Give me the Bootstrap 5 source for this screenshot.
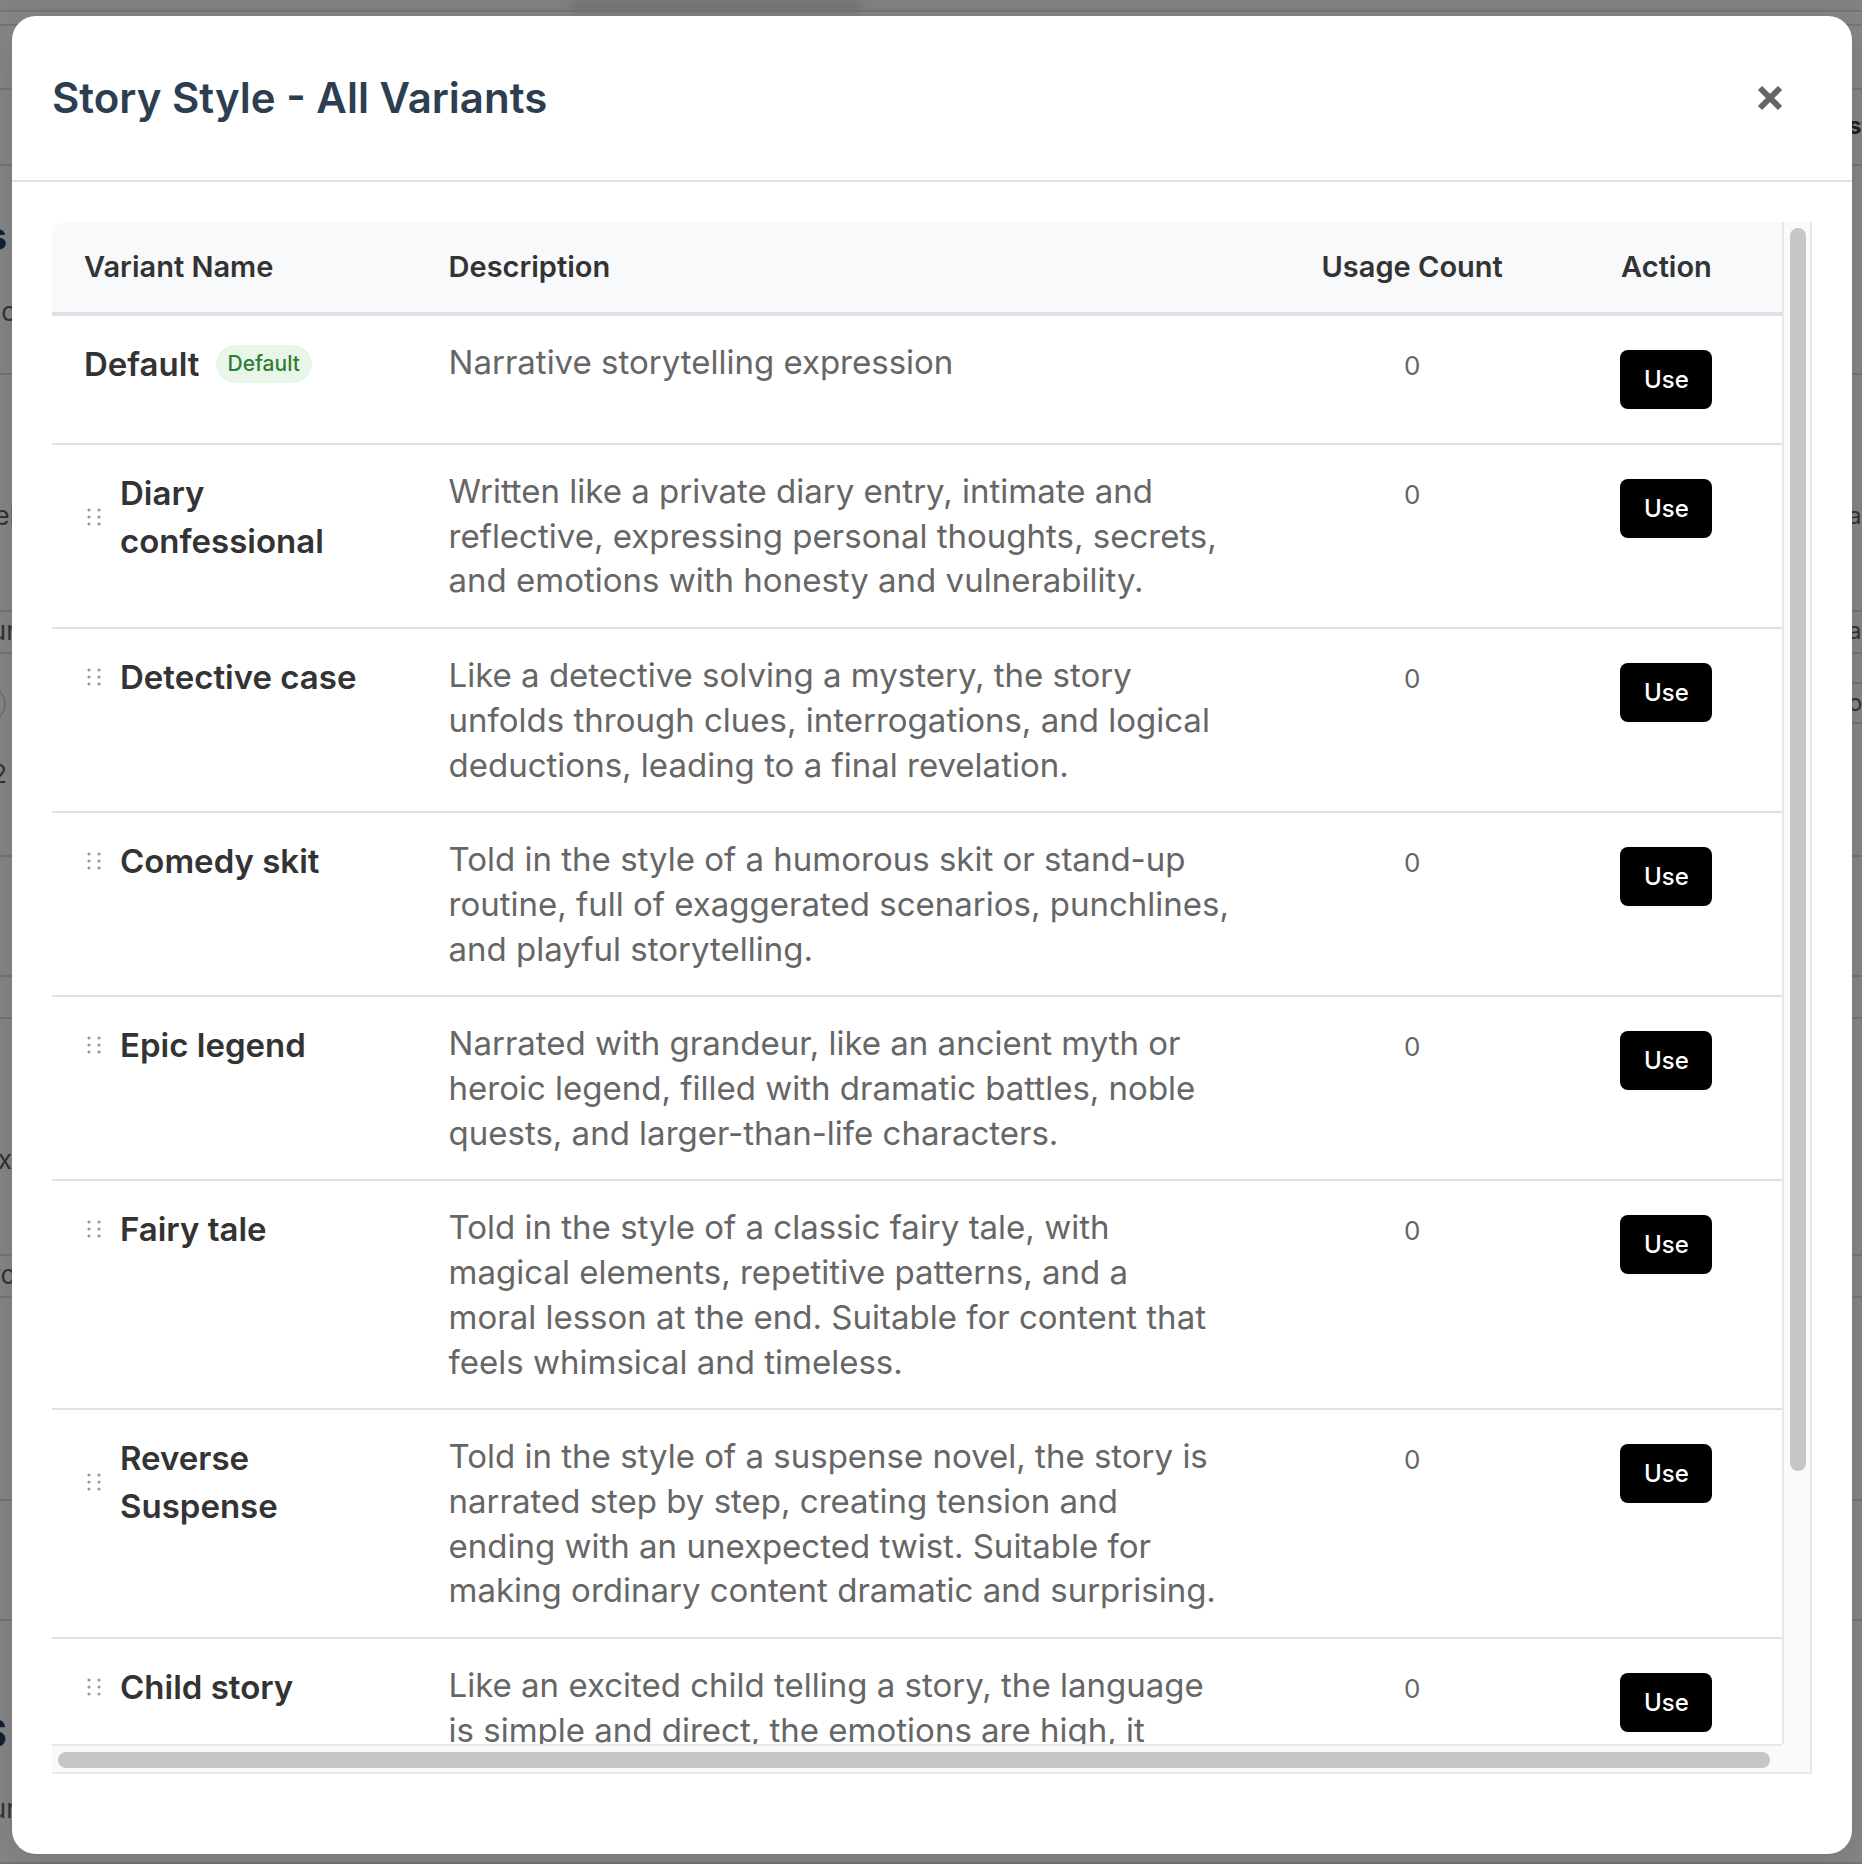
<!DOCTYPE html>
<html lang="en">
<head>
<meta charset="utf-8">
<meta name="viewport" content="width=device-width, initial-scale=1">
<title>Story Style - All Variants</title>
<link href="https://cdn.jsdelivr.net/npm/bootstrap@5.3.0/dist/css/bootstrap.min.css" rel="stylesheet">
<style>
  body { font-family: Inter, "Noto Sans", sans-serif; background: #868686; color: #333; height: 100vh; overflow: hidden; }

  /* dimmed page under the dialog */
  .under-page { position: absolute; inset: 0; overflow: hidden; font-size: 26px; line-height: 32px; color: #333; }
  .under-page section { display: flex; justify-content: space-between; border-bottom: 2px solid #757575; }
  .edge { width: 16px; display: flex; flex-direction: column; align-items: flex-end; white-space: nowrap; }
  .edge.edge-end { width: 14px; align-items: flex-start; font-size: 24px; }
  .edge b { color: #16212d; }
  .under-page .h-top { height: 12px; background: #828282; justify-content: center; }
  .top-shade { width: 290px; margin-right: 430px; background: #737373; filter: blur(4px); }
  .h-gap { height: 14px; }
  .h-bar { height: 64px; }
  .h-tabs { height: 76px; padding-top: 20px; }
  .h-intro { height: 209px; padding-top: 50px; }
  .h-field { height: 237px; padding-top: 125px; }
  .h-strip { height: 42px; padding-top: 3px; }
  .h-chips { height: 203px; padding-top: 28px; }
  .h-wide { height: 120px; }
  .h-last { height: 243px; padding-top: 92px; }
  .edge .big { font-size: 38px; line-height: 40px; }
  .edge .pill { width: 40px; height: 36px; margin: 4px 10px 36px 0; border: 2px solid #737373; border-radius: 18px; flex: none; }
  .edge .boxed { border: solid #737373; border-width: 2px 0; line-height: 38px; }
  .edge .pad-s { margin-right: 9px; }

  .variants-dialog { position: absolute; inset: 16px 10px 10px 12px; border-radius: 24px; box-shadow: 0 8px 40px rgba(0,0,0,.12); }
  .dialog-head { padding: 40px; height: 166px; border-bottom: 2px solid #dee2e6; }
  .dialog-title { font-size: 42px; line-height: 48px; font-weight: 600; color: #2c3e50; }
  .close-btn { width: 84px; height: 84px; }
  .dialog-main { padding: 40px 40px 80px; min-height: 0; }

  /* scroll area: content with a track on the right and one below */
  .scroll-grid { display: grid; grid-template: minmax(0, 1fr) 30px / minmax(0, 1fr) 30px; min-height: 0; }
  .scroll-view { overflow: hidden; border-top-left-radius: 16px; }
  .track-y { background: #fafafa; border: solid #e8e8e8; border-width: 0 2px; padding: 6px 4px 0 6px; }
  .track-x { background: #fafafa; border: solid #e8e8e8; border-width: 2px 0; padding: 6px 12px 4px 6px; }
  .track-corner { background: #fafafa; border: solid #e8e8e8; border-width: 0 2px 2px 0; }
  .thumb { background: #c6c6c6; border-radius: 8px; }
  .track-y .thumb { height: 82%; }
  .track-x .thumb { height: 16px; }

  .variants-table { width: calc(100% + 6px); table-layout: fixed; border-collapse: separate; border-spacing: 0; margin: 0; }
  .variants-table th { background: #f8f9fb; font-size: 29px; line-height: 42px; font-weight: 600; padding: 24px 32px; border-bottom: 4px solid #dee2e6; white-space: nowrap; }
  .variants-table td { padding: 24px 32px; border-bottom: 2px solid #dee2e6; vertical-align: top; }
  .variants-table td:nth-child(2) { padding-right: 16px; }
  .c-name { width: 21%; } .c-desc { width: 49.7%; } .c-count { width: 15.3%; } .c-act { width: 14%; }
  .v-name { font-size: 33px; line-height: 48px; font-weight: 600; }
  .v-desc { font-size: 33px; line-height: 1.355; color: #666; }
  .v-count { font-size: 26px; line-height: 52px; color: #666; }
  .grip { width: 20px; height: 20px; flex: none; fill: #999; }
  .tag-default { font-size: 21px; line-height: 30px; font-weight: 500; color: #2e7d32; background: #e8f5e9; border-radius: 20px; padding: 4px 12px; }
  .use-btn { width: 92px; height: 59px; margin: 10px 0; background: #000; color: #fff; border: 0; border-radius: 8px; font-size: 24px; line-height: 36px; font-weight: 500; padding: 0; }
</style>
</head>
<body>
<div class="under-page" aria-hidden="true">
  <section class="h-top"><div class="top-shade"></div></section>
  <section class="h-gap"></section>
  <section class="h-bar"></section>
  <section class="h-tabs"><div class="edge"></div><div class="edge edge-end"><b>st</b></div></section>
  <section class="h-intro"><div class="edge"><b class="big pad-s">s</b><span class="mt-4 pt-3">c</span></div></section>
  <section class="h-field"><div class="edge"><span>el</span></div><div class="edge edge-end"><span>a</span></div></section>
  <section class="h-strip"><div class="edge"><span>ur</span></div><div class="edge edge-end"><span>av</span></div></section>
  <section class="h-chips"><div class="edge"><i class="pill"></i><span class="pad-s">2</span></div><div class="edge edge-end"><span class="boxed">oo</span></div></section>
  <section class="h-wide"></section>
  <section class="h-strip"></section>
  <section class="h-field"><div class="edge"><span class="me-1">x</span></div></section>
  <section class="h-strip"><div class="edge"><span>ro</span></div></section>
  <section class="h-chips"></section>
  <section class="h-wide"></section>
  <section class="h-last"><div class="edge"><b class="big pad-s">S</b><span class="mt-4 pt-3">ur</span></div></section>
</div>

<div class="variants-dialog bg-white d-flex flex-column overflow-hidden" role="dialog" aria-labelledby="dlgTitle">
  <header class="dialog-head d-flex align-items-center justify-content-between">
    <h1 class="dialog-title m-0" id="dlgTitle">Story Style - All Variants</h1>
    <button class="close-btn btn p-0 d-flex align-items-center justify-content-center" type="button" aria-label="Close">
      <svg width="26" height="26" viewBox="0 0 26 26"><path d="M3 3 23 23M23 3 3 23" stroke="#666" stroke-width="6" fill="none"/></svg>
    </button>
  </header>
  <main class="dialog-main flex-grow-1 d-flex flex-column">
    <div class="scroll-grid flex-grow-1">
      <div class="scroll-view">
        <table class="variants-table">
          <thead><tr><th class="c-name">Variant Name</th><th class="c-desc">Description</th><th class="c-count text-center">Usage Count</th><th class="c-act text-center">Action</th></tr></thead>
          <tbody id="rows"></tbody>
        </table>
      </div>
      <div class="track-y"><div class="thumb"></div></div>
      <div class="track-x"><div class="thumb"></div></div>
      <div class="track-corner"></div>
    </div>
  </main>
</div>

<script src="https://cdn.jsdelivr.net/npm/bootstrap@5.3.0/dist/js/bootstrap.bundle.min.js"></script>
<script>
  const variants = [
    ["Default", "Narrative storytelling expression"],
    ["Diary confessional", "Written like a private diary entry, intimate and<br>reflective, expressing personal thoughts, secrets,<br>and emotions with honesty and vulnerability."],
    ["Detective case", "Like a detective solving a mystery, the story<br>unfolds through clues, interrogations, and logical<br>deductions, leading to a final revelation."],
    ["Comedy skit", "Told in the style of a humorous skit or stand-up<br>routine, full of exaggerated scenarios, punchlines,<br>and playful storytelling."],
    ["Epic legend", "Narrated with grandeur, like an ancient myth or<br>heroic legend, filled with dramatic battles, noble<br>quests, and larger-than-life characters."],
    ["Fairy tale", "Told in the style of a classic fairy tale, with<br>magical elements, repetitive patterns, and a<br>moral lesson at the end. Suitable for content that<br>feels whimsical and timeless."],
    ["Reverse Suspense", "Told in the style of a suspense novel, the story is<br>narrated step by step, creating tension and<br>ending with an unexpected twist. Suitable for<br>making ordinary content dramatic and surprising."],
    ["Child story", "Like an excited child telling a story, the language<br>is simple and direct, the emotions are high, it"]
  ];
  const grip = '<svg class="grip" viewBox="0 0 20 20">' +
    [5, 15].map(x => [3, 10, 17].map(y => `<circle cx="${x}" cy="${y}" r="1.6"/>`).join("")).join("") + "</svg>";
  document.getElementById("rows").innerHTML = variants.map(([name, text], i) => `
    <tr>
      <td><div class="d-flex align-items-center gap-3">${i ? grip : ""}<span class="v-name">${name}</span>${i ? "" : '<span class="tag-default">Default</span>'}</div></td>
      <td><div class="v-desc">${text}</div></td>
      <td class="text-center"><div class="v-count">0</div></td>
      <td class="text-center"><button class="use-btn" type="button">Use</button></td>
    </tr>`).join("");
</script>
</body>
</html>
